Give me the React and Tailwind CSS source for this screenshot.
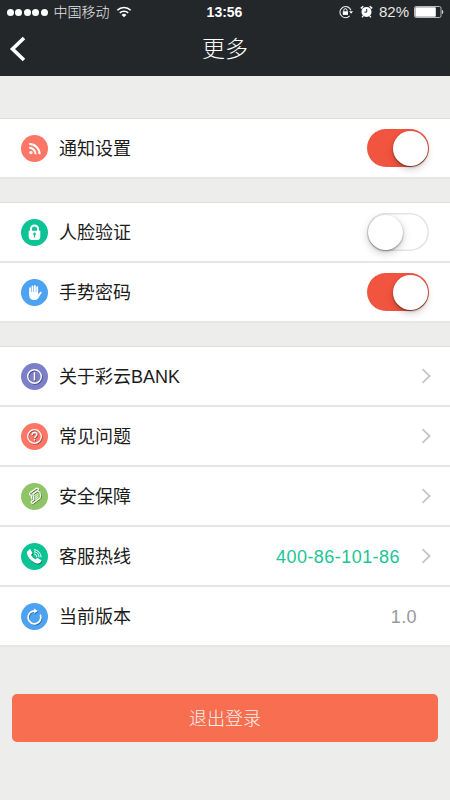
import React, { useState } from 'react';

const IconCircle = ({ className, children }) => (
  <span className={`flex h-[27px] w-[27px] shrink-0 items-center justify-center rounded-full ${className}`}>
    <svg width="27" height="27" viewBox="0 0 27 27" fill="none">
      {children}
    </svg>
  </span>
);

const RssIcon = () => (
  <IconCircle className="bg-[#fd7666]">
    <circle cx="9.9" cy="17.6" r="1.7" fill="#fff" />
    <path d="M8.2 12.8A6.3 6.3 0 0 1 14.6 19.2M8.2 9A10.2 10.2 0 0 1 18.6 19.2" stroke="#fff" strokeWidth="2.1" />
  </IconCircle>
);

const LockIcon = () => (
  <IconCircle className="bg-[#0bc394]">
    <path d="M9.9 12V10a3.6 3.6 0 0 1 7.2 0V12" stroke="#fff" strokeWidth="2" />
    <path d="M7.7 11.7h11.6v5.8a3.6 3.6 0 0 1-3.6 3.6h-4.4a3.6 3.6 0 0 1-3.6-3.6z" fill="#fff" />
    <circle cx="13.5" cy="14.9" r="1.3" fill="#0bc394" />
    <path d="M13.5 15v3.4" stroke="#0bc394" strokeWidth="1.2" />
  </IconCircle>
);

const HandIcon = () => (
  <IconCircle className="bg-[#4da2f1]">
    <path d="M9.1 15.2V9.2M11.5 14V7.4M13.9 14V7M16.2 14.5V8.2" stroke="#fff" strokeWidth="1.8" strokeLinecap="round" />
    <path d="M8.2 13h8.9v2.5l2.1-2.4c.7-.7 1.8-.2 1.4.7l-3.2 5.1c-1 1.5-2.2 2.1-4.2 2.1-3.2 0-5-2-5-4.8z" fill="#fff" />
  </IconCircle>
);

const InfoIcon = () => (
  <IconCircle className="bg-[#7c80c9]">
    <g stroke="#454779" transform="translate(.8 .8)">
      <circle cx="13.5" cy="13.5" r="6.8" strokeWidth="1.3" />
      <path d="M13.5 9.4v8" strokeWidth="1.6" />
    </g>
    <circle cx="13.5" cy="13.5" r="6.8" stroke="#fff" strokeWidth="1.4" />
    <path d="M13.5 9.3v8.1" stroke="#fff" strokeWidth="1.6" />
  </IconCircle>
);

const QuestionIcon = () => (
  <IconCircle className="bg-[#fd7666]">
    <g stroke="#8f4138" transform="translate(.7 .7)">
      <circle cx="13.5" cy="13.5" r="6.8" strokeWidth="1.2" />
      <path d="M11.2 11.9c0-3.2 4.7-3 4.7-.2 0 1.6-2.2 1.6-2.2 3.4M13.6 16v1.6" strokeWidth="1.4" />
    </g>
    <circle cx="13.5" cy="13.5" r="6.8" stroke="#fff" strokeWidth="1.3" />
    <path d="M11.2 11.9c0-3.2 4.7-3 4.7-.2 0 1.6-2.2 1.6-2.2 3.4M13.6 16v1.6" stroke="#fff" strokeWidth="1.4" />
  </IconCircle>
);

const ScrollIcon = () => {
  const outline = 'M8.8 9.9l6.4-4.6c1.5-.8 2.9.7 1.9 2l-5.2 3.7 1 5.6-2.1 1.5c-1.3.8-.3 3 1.3 2.1l6.3-4.6c1.1-.9 1.4-1.9 1.1-3.3l-.7-3.3-2-.8M8.8 9.9c-1 1-.2 2.3 1.200 2.100l1 4.300';
  return (
    <IconCircle className="bg-[#8fc567]">
      <path d={outline} transform="translate(.7 .8)" stroke="#4e7040" strokeWidth="1" strokeLinejoin="round" />
      <path d={outline} stroke="#fff" strokeWidth="1.2" strokeLinejoin="round" />
      <path d="M13.3 12.8l3.5-2.300M13.700 14.600l3.500-2.300M14 16.300l3.200-2.100" stroke="#fff" strokeWidth=".9" />
    </IconCircle>
  );
};

const PhoneIcon = () => {
  const handset = 'M6.5 8.2l1.9-1.7c.5-.4 1-.3 1.3.2l1.7 2.7c.3.6.1 1-.4 1.5l-.9.8c.8 2 2.4 3.7 4.5 4.7l1-1c.4-.4.9-.5 1.4-.2l3 1.9c.5.3.6.8.2 1.3-1.1 1.7-2.7 2.6-4.8 2C10.8 19 7 15 6 10.6c-.2-1-.2-1.7.5-2.4z';
  return (
    <IconCircle className="bg-[#0bc394]">
      <path d={handset} transform="translate(.7 .8)" fill="#07694f" />
      <path d={handset} fill="#fff" />
      <path d="M13.4 10.9a3.2 3.2 0 0 1 2.5 3.1M13.4 8.8a5.2 5.2 0 0 1 4.6 5.1M13.4 6.7a7.2 7.2 0 0 1 6.7 7.2" stroke="#fff" strokeWidth="1" strokeLinecap="round" />
    </IconCircle>
  );
};

const RefreshIcon = () => (
  <IconCircle className="bg-[#4da2f1]">
    <g transform="translate(.6 .8)">
      <path d="M19.5 12.3A6.4 6.4 0 1 1 13.2 8" stroke="#235b96" strokeWidth="1.5" />
      <path d="M13 5.4l3.9 2.5-3.7 2.5z" fill="#235b96" />
    </g>
    <path d="M19.5 12.3A6.4 6.4 0 1 1 13.2 8" stroke="#fff" strokeWidth="1.8" strokeLinecap="round" />
    <path d="M13 5.4l3.9 2.5-3.7 2.5z" fill="#fff" />
  </IconCircle>
);

const Chevron = () => (
  <svg className="mb-[1px] ml-[21px] h-4 w-[10px] shrink-0" viewBox="0 0 10 16" fill="none">
    <path d="M1.5 1.2L8.6 8l-7.1 6.8" stroke="#c6c6ca" strokeWidth="1.8" />
  </svg>
);

const Toggle = ({ on, onChange }) => (
  <button
    role="switch"
    aria-checked={on}
    onClick={onChange}
    className={`mr-[2px] flex h-[38px] w-[62px] shrink-0 items-center rounded-full ${
      on ? 'justify-end bg-[#f1543f] pr-px' : 'justify-start bg-white pl-px inset-ring-[1.5px] inset-ring-[#e4e4e4]'
    }`}
  >
    <span
      className={`h-[35px] w-[35px] rounded-full bg-white ${
        on ? 'shadow-[0_1px_2px_rgba(0,0,0,0.45),0_4px_7px_rgba(0,0,0,0.16)]' : 'shadow-[0_1px_2px_rgba(0,0,0,0.4),0_3px_9px_rgba(0,0,0,0.2)]'
      }`}
    />
  </button>
);

const Row = ({ icon, label, children }) => (
  <div className="flex h-[60px] items-center border-b-2 border-[#e6e6e6] pr-[19px] pl-[21px] text-lg">
    {icon}
    <span className="ml-[11px] pt-[2px] text-[#1c1c1c]">{label}</span>
    <div className="ml-auto flex items-center">{children}</div>
  </div>
);

const Section = ({ children }) => (
  <section className="mb-[23px] border-t border-[#dedede] bg-white">{children}</section>
);

const StatusBar = () => (
  <div className="grid h-6 grid-cols-[1fr_auto_1fr] items-center pr-[6px] pl-[7px] text-sm text-[#e6e7e7]">
    <div className="flex items-center">
      <div className="flex gap-[1.4px]">
        {[0, 1, 2, 3, 4].map(i => (
          <span key={i} className="h-[7px] w-[7px] rounded-full bg-white" />
        ))}
      </div>
      <span className="ml-[6px] font-light">中国移动</span>
      <svg className="ml-[6px]" width="16" height="12" viewBox="0 0 16 12" fill="none">
        <path d="M1.3 4.3a9.5 9.5 0 0 1 13.4 0M3.8 6.9a6 6 0 0 1 8.4 0" stroke="#fff" strokeWidth="1.6" />
        <path d="M5.6 8.9a3.4 3.4 0 0 1 4.8 0L8 11.3z" fill="#fff" />
      </svg>
    </div>
    <span className="mr-[2px] font-bold text-white">13:56</span>
    <div className="flex items-center justify-end">
      <svg width="14" height="14" viewBox="0 0 14 14" fill="none">
        <path d="M11.9 5.3A5.6 5.6 0 1 0 10.7 10.9" stroke="#e6e7e7" strokeWidth="1.1" />
        <path d="M10.1 6.3h3.9l-1.9 2.5z" fill="#fff" />
        <path d="M3.8 6.3h5.2v3.6h-5.2z" fill="#fff" />
        <path d="M4.8 6.5V5.3a1.6 1.6 0 0 1 3.2 0v1.2" stroke="#fff" strokeWidth="1" />
      </svg>
      <svg className="ml-[7px]" width="13" height="13" viewBox="0 0 13 13" fill="none">
        <circle cx="6.5" cy="6.9" r="5" fill="#fff" />
        <path d="M.8 3.4L3.3 1.2M12.2 3.4L9.7 1.2M3.3 10.9l-1.2 1.3M9.7 10.9l1.2 1.3" stroke="#fff" strokeWidth="1.4" />
        <path d="M6.7 3.9v3.2H4.4" stroke="#23272a" strokeWidth="1" />
      </svg>
      <span className="ml-[6px] text-[15px]">82%</span>
      <svg className="ml-[5px]" width="30" height="12" viewBox="0 0 30 12" fill="none">
        <rect x=".5" y=".5" width="26.5" height="11" rx="1.6" stroke="#b7b9ba" />
        <rect x="1.3" y="1.3" width="20.5" height="9.4" rx=".8" fill="#fff" />
        <path d="M28 4c1.7.4 1.7 3.6 0 4z" fill="#d8d9d9" />
      </svg>
    </div>
  </div>
);

const App = () => {
  const [settings, setSettings] = useState({ notify: true, face: false, gesture: true });

  const toggle = (key) => setSettings(prev => ({ ...prev, [key]: !prev[key] }));

  return (
    <div className="h-[800px] w-full overflow-hidden bg-[#ededec] font-['Liberation_Sans','Noto_Sans_CJK_SC',sans-serif]">
      <header className="h-[76px] bg-[#23272a]">
        <StatusBar />
        <div className="grid h-[50px] grid-cols-[1fr_auto_1fr] items-center">
          <button className="ml-[9px] w-4" aria-label="返回">
            <svg width="17" height="26" viewBox="0 0 17 26" fill="none">
              <path d="M15 2L3.5 13 15 24" stroke="#fff" strokeWidth="3.6" />
            </svg>
          </button>
          <h1 className="text-[23px] font-light text-white">更多</h1>
        </div>
      </header>

      <main className="pt-[42px]">
        <Section>
          <Row icon={<RssIcon />} label="通知设置">
            <Toggle on={settings.notify} onChange={() => toggle('notify')} />
          </Row>
        </Section>

        <Section>
          <Row icon={<LockIcon />} label="人脸验证">
            <Toggle on={settings.face} onChange={() => toggle('face')} />
          </Row>
          <Row icon={<HandIcon />} label="手势密码">
            <Toggle on={settings.gesture} onChange={() => toggle('gesture')} />
          </Row>
        </Section>

        <Section>
          <Row icon={<InfoIcon />} label="关于彩云BANK">
            <Chevron />
          </Row>
          <Row icon={<QuestionIcon />} label="常见问题">
            <Chevron />
          </Row>
          <Row icon={<ScrollIcon />} label="安全保障">
            <Chevron />
          </Row>
          <Row icon={<PhoneIcon />} label="客服热线">
            <span className="pt-[2px] tracking-[0.45px] text-[#1cc596]">400-86-101-86</span>
            <Chevron />
          </Row>
          <Row icon={<RefreshIcon />} label="当前版本">
            <span className="mr-[14px] pt-[2px] tracking-[0.4px] text-[#999]">1.0</span>
          </Row>
        </Section>

        {/* Logout */}
        <div className="px-3 pt-6">
          <button className="h-12 w-full rounded-[5px] bg-[#f86e50] pt-px text-lg font-light text-[#fff1ec]">退出登录</button>
        </div>
      </main>
    </div>
  );
};

export default App;
